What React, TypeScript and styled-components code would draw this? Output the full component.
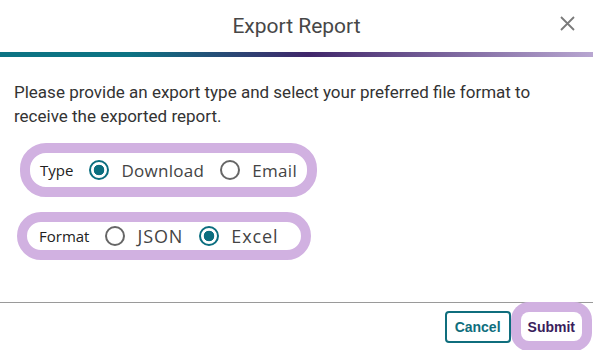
import { useState } from "react";
import styled, { createGlobalStyle } from "styled-components";

const GlobalStyle = createGlobalStyle`
  body {
    margin: 0;
    background: #ffffff;
  }
`;

const Modal = styled.div`
  width: 593px;
  height: 350px;
  background: #ffffff;
  display: flex;
  flex-direction: column;
  overflow: hidden;
  font-family: Roboto, "Liberation Sans", sans-serif;
`;

const Header = styled.header`
  height: 52px;
  display: grid;
  grid-template-columns: 1fr auto 1fr;
  align-items: center;
`;

const Title = styled.h2`
  grid-column: 2;
  margin: 0;
  font-size: 21px;
  font-weight: 400;
  color: #474747;
`;

const CloseButton = styled.button`
  grid-column: 3;
  justify-self: end;
  align-self: start;
  margin: 13px 16px 0 0;
  width: 20px;
  height: 20px;
  padding: 0;
  border: none;
  background: none;
  display: flex;
  align-items: center;
  justify-content: center;
  cursor: pointer;
`;

const GradientBar = styled.div`
  height: 5px;
  background: linear-gradient(
    90deg,
    #0c7383 0%,
    #0c7383 22%,
    #40266a 52%,
    #b8a6d1 100%
  );
`;

const Body = styled.div`
  flex: 1;
  padding: 23px 14px 0;
  display: flex;
  flex-direction: column;
  align-items: flex-start;
`;

const Intro = styled.p`
  margin: 0 0 15px;
  font-size: 17px;
  line-height: 24px;
  color: #333333;
`;

const Group = styled.div<{ $height: number; $offset: number; $padLeft: number; $padRight: number }>`
  display: inline-flex;
  align-items: center;
  height: ${(p) => p.$height}px;
  margin-left: ${(p) => p.$offset}px;
  margin-bottom: 15px;
  padding: 0 ${(p) => p.$padRight}px 0 ${(p) => p.$padLeft}px;
  border: 10px solid #d1b1e1;
  border-radius: 26px;
  font-family: "Open Sans", "Noto Sans", sans-serif;
`;

const GroupLabel = styled.span`
  font-size: 15px;
  color: #222222;
  margin-right: 16px;
`;

const Option = styled.label<{ $size: number; $spacing: number }>`
  display: inline-flex;
  align-items: center;
  gap: 12px;
  font-size: ${(p) => p.$size}px;
  letter-spacing: ${(p) => p.$spacing}px;
  color: #444444;
  cursor: pointer;

  & + & {
    margin-left: 16px;
  }
`;

const Radio = styled.input.attrs({ type: "radio" })`
  appearance: none;
  margin: 0;
  width: 20px;
  height: 20px;
  border-radius: 50%;
  border: 2px solid #666666;
  background: #ffffff;
  cursor: pointer;

  &:checked {
    border-color: #0b6e7f;
    background: radial-gradient(circle, #0b6e7f 0 5px, #ffffff 5.6px);
  }
`;

const Footer = styled.footer`
  height: 47px;
  border-top: 1px solid #9a9a9a;
  display: flex;
  justify-content: flex-end;
  align-items: center;
  gap: 10px;
  padding-right: 11px;
`;

const Button = styled.button<{ $primary?: boolean }>`
  font-family: "Liberation Sans", Arial, sans-serif;
  font-size: 14px;
  font-weight: 700;
  background: #ffffff;
  cursor: pointer;
  height: ${(p) => (p.$primary ? 29 : 32)}px;
  padding: 0 ${(p) => (p.$primary ? 7 : 8)}px;
  border: ${(p) => (p.$primary ? "none" : "2px solid #0f6e7d")};
  border-radius: ${(p) => (p.$primary ? 8 : 4)}px;
  color: ${(p) => (p.$primary ? "#3a1d5c" : "#0f6e7d")};
  box-shadow: ${(p) => (p.$primary ? "0 0 0 10px #d1b1e1" : "none")};
`;

export default function App() {
  const [type, setType] = useState("download");
  const [format, setFormat] = useState("excel");

  return (
    <Modal>
      <GlobalStyle />
      <Header>
        <Title>Export Report</Title>
        <CloseButton aria-label="Close">
          <svg width="15" height="15" viewBox="0 0 15 15">
            <path d="M1 1 L14 14 M14 1 L1 14" stroke="#7a7a7a" strokeWidth="1.8" />
          </svg>
        </CloseButton>
      </Header>
      <GradientBar />
      <Body>
        <Intro>
          Please provide an export type and select your preferred file format to
          <br />
          receive the exported report.
        </Intro>
        <Group $height={34} $offset={6} $padLeft={10} $padRight={10}>
          <GroupLabel>Type</GroupLabel>
          <Option $size={17} $spacing={0.3}>
            <Radio name="type" checked={type === "download"} onChange={() => setType("download")} />
            Download
          </Option>
          <Option $size={17} $spacing={0.3}>
            <Radio name="type" checked={type === "email"} onChange={() => setType("email")} />
            Email
          </Option>
        </Group>
        <Group $height={28} $offset={3} $padLeft={12} $padRight={22}>
          <GroupLabel>Format</GroupLabel>
          <Option $size={18} $spacing={0.9}>
            <Radio name="format" checked={format === "json"} onChange={() => setFormat("json")} />
            JSON
          </Option>
          <Option $size={18} $spacing={0.9}>
            <Radio name="format" checked={format === "excel"} onChange={() => setFormat("excel")} />
            Excel
          </Option>
        </Group>
      </Body>
      <Footer>
        <Button>Cancel</Button>
        <Button $primary>Submit</Button>
      </Footer>
    </Modal>
  );
}
